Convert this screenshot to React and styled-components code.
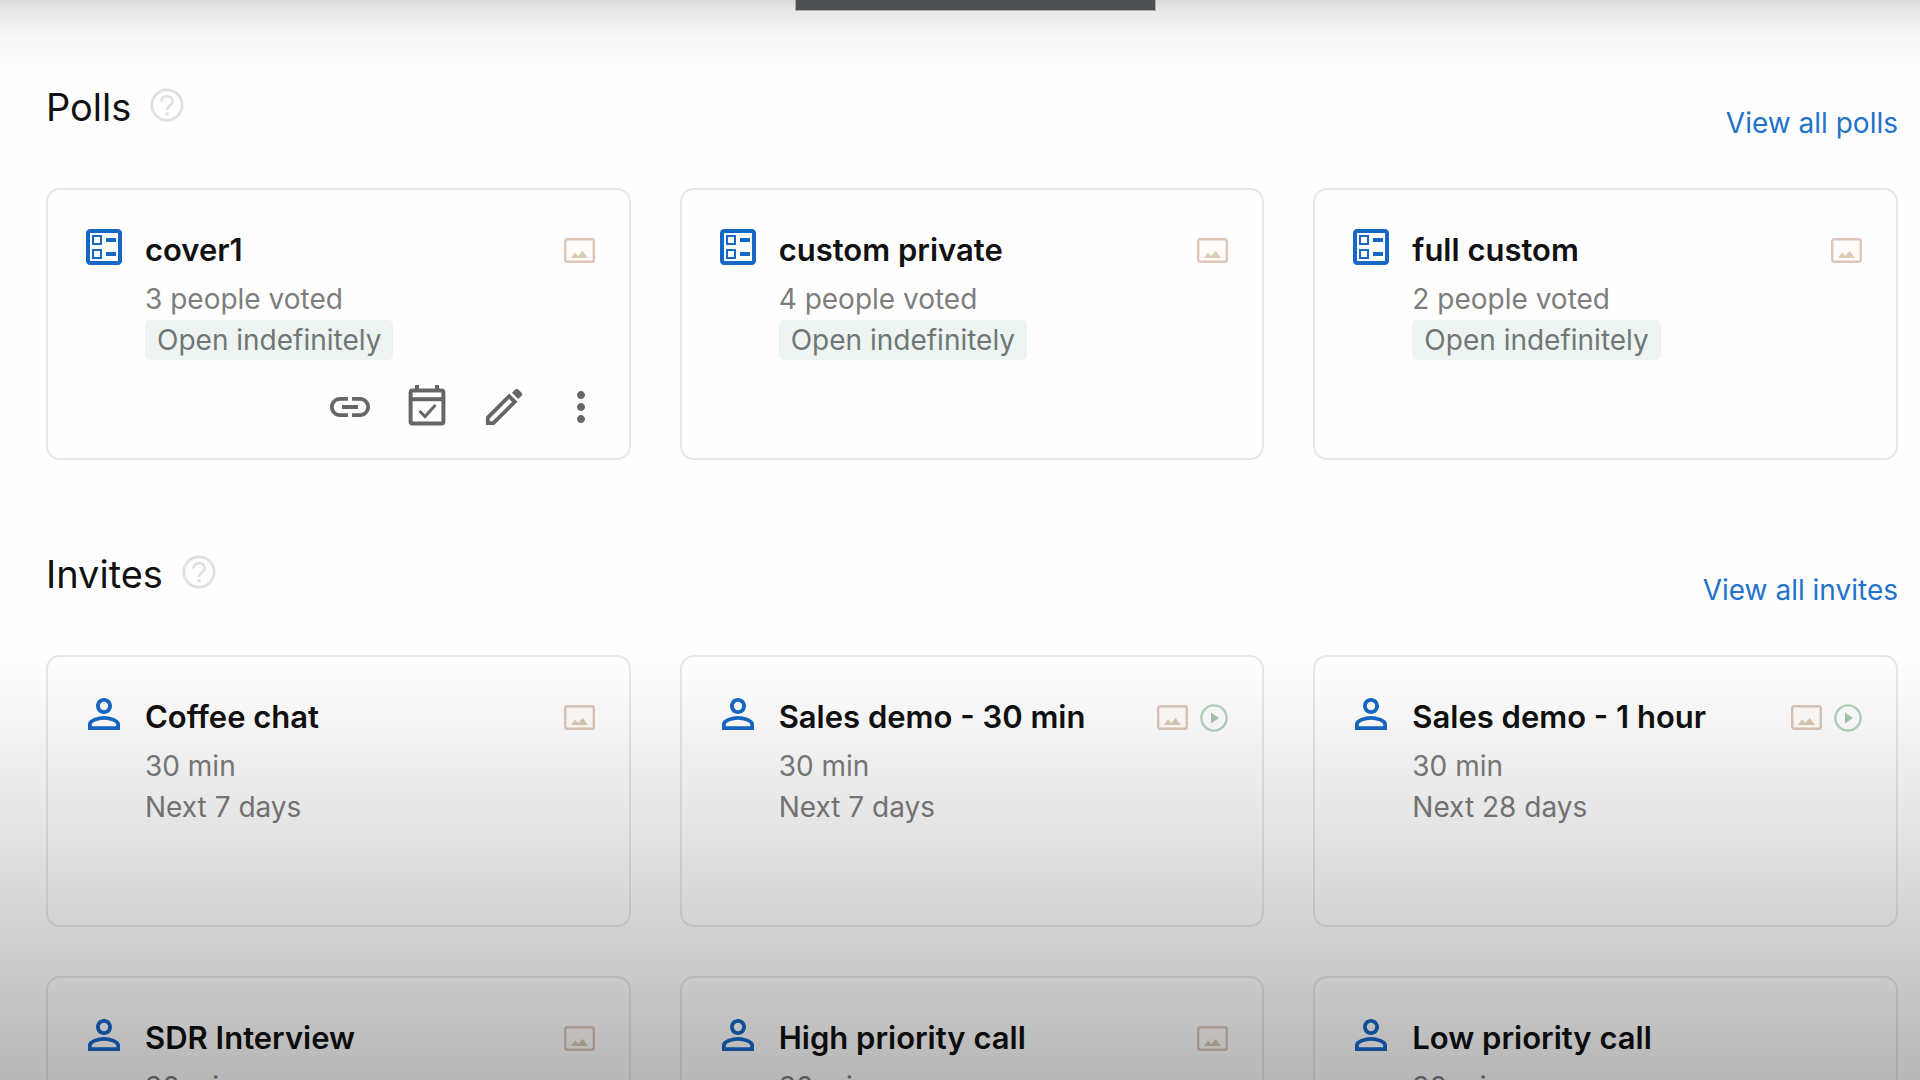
import React from 'react'
import styled, { createGlobalStyle } from 'styled-components'
import { MdOutlineBallot, MdPersonOutline, MdLink, MdMoreVert } from 'react-icons/md'

const polls = [
    { title: 'cover1', people: 3, actions: true },
    { title: 'custom private', people: 4 },
    { title: 'full custom', people: 2 },
]

const invites = [
    { title: 'Coffee chat', length: '30 min', range: 'Next 7 days', image: true },
    { title: 'Sales demo - 30 min', length: '30 min', range: 'Next 7 days', image: true, video: true },
    { title: 'Sales demo - 1 hour', length: '30 min', range: 'Next 28 days', image: true, video: true },
    { title: 'SDR Interview', length: '30 min', range: 'Next 7 days', image: true },
    { title: 'High priority call', length: '30 min', range: 'Next 7 days', image: true },
    { title: 'Low priority call', length: '30 min', range: 'Next 7 days' },
]

function HelpIcon() {
    return (
        <svg width="34" height="34" viewBox="0 0 34 34" fill="none" stroke="#e0e0e0" strokeWidth="2.8">
            <circle cx="17" cy="17" r="15.2" />
            <path d="M11.5 13.5c0-3.2 2.4-5.4 5.5-5.4s5.5 2.2 5.5 5.2c0 3.9-5.4 4.3-5.4 8.7" />
            <path d="M17.1 24.2v3.2" strokeWidth="3" />
        </svg>
    )
}

function ImageIcon() {
    return (
        <svg width="31" height="25" viewBox="0 0 31 25">
            <rect x="1.2" y="1.2" width="28.6" height="22.6" rx="2" fill="#fffaf5" fillOpacity="0.5" stroke="#dcc6b9" strokeWidth="2.4" />
            <path d="M7 20l4-5.5 3.2 3.4 4.6-5 5 7.1z" fill="#dccab4" />
        </svg>
    )
}

function PlayIcon() {
    return (
        <svg width="28" height="28" viewBox="0 0 28 28">
            <circle cx="14" cy="14" r="12.6" fill="none" stroke="#b4d3bd" strokeWidth="2.4" />
            <path d="M11 8.5l8 5.5-8 5.5z" fill="#a8c8b0" />
        </svg>
    )
}

function CalendarIcon() {
    return (
        <svg width="48" height="48" viewBox="0 0 48 48" fill="none" stroke="currentColor">
            <path d="M14 2v6M34 2v6" strokeWidth="4" />
            <rect x="7.6" y="7.6" width="32.8" height="33" rx="2" strokeWidth="4" />
            <path d="M8 16.2h32" strokeWidth="4" />
            <path d="M16.5 28l5.5 5.5L32.5 22" strokeWidth="3" />
        </svg>
    )
}

function PencilIcon() {
    return (
        <svg width="48" height="48" viewBox="0 0 48 48" fill="none" stroke="currentColor">
            <path d="M7.8 40.2v-5.6L29.2 13.2l5.6 5.6L13.4 40.2z" strokeWidth="3.8" />
            <path d="M32 9.8l3.6-3.6q1.2-1 2.4 0l3.8 3.8q1 1.2 0 2.4L38.2 16z" fill="currentColor" stroke="none" />
        </svg>
    )
}

function Section({ title, link, children }) {
    return (
        <section>
            <SectionHeader>
                <SectionTitle>{title}</SectionTitle>
                <HelpButton type="button" aria-label={`About ${title}`}>
                    <HelpIcon />
                </HelpButton>
                <ViewAll href="#">{link}</ViewAll>
            </SectionHeader>
            <Grid>{children}</Grid>
        </section>
    )
}

function Card({ icon, title, image, video, actions, children }) {
    return (
        <CardBox>
            <CardTop>
                <TypeIcon>{icon}</TypeIcon>
                <CardText>
                    <CardTitle>{title}</CardTitle>
                    {children}
                </CardText>
                <Marks>
                    {image && <ImageIcon />}
                    {video && <PlayIcon />}
                </Marks>
            </CardTop>
            {actions && (
                <Actions>
                    <ActionButton type="button" aria-label="Copy link"><MdLink /></ActionButton>
                    <ActionButton type="button" aria-label="Book"><CalendarIcon /></ActionButton>
                    <ActionButton type="button" aria-label="Edit"><PencilIcon /></ActionButton>
                    <ActionButton type="button" aria-label="More"><MdMoreVert /></ActionButton>
                </Actions>
            )}
        </CardBox>
    )
}

export default function App() {
    return (
        <Page>
            <GlobalStyle />
            <Section title="Polls" link="View all polls">
                {polls.map((poll) => (
                    <Card key={poll.title} icon={<MdOutlineBallot />} title={poll.title} image actions={poll.actions}>
                        <Detail>{poll.people} people voted</Detail>
                        <Badge>Open indefinitely</Badge>
                    </Card>
                ))}
            </Section>
            <Section title="Invites" link="View all invites">
                {invites.map((invite) => (
                    <Card key={invite.title} icon={<MdPersonOutline />} title={invite.title} image={invite.image} video={invite.video}>
                        <Detail>{invite.length}</Detail>
                        <Detail>{invite.range}</Detail>
                    </Card>
                ))}
            </Section>
            <Shade />
            <TopBar>
                <Tab />
            </TopBar>
        </Page>
    )
}

const GlobalStyle = createGlobalStyle`
    * {
        box-sizing: border-box;
    }

    body {
        margin: 0;
        background: #fefefe;
        font-family: Inter, sans-serif;
        color: #111;
    }

    button {
        padding: 0;
        border: 0;
        background: none;
        cursor: pointer;
    }

    svg {
        display: block;
    }
`

const Page = styled.main`
    display: flex;
    flex-direction: column;
    gap: 79px;
    height: 100vh;
    padding: 72px 22px 0 46px;
    overflow: hidden;
`

const SectionHeader = styled.header`
    display: flex;
    align-items: flex-start;
    height: 116px;
`

const SectionTitle = styled.h2`
    margin: 0;
    padding-top: 11px;
    font-size: 38px;
    font-weight: 400;
    line-height: 48px;
`

const HelpButton = styled.button`
    margin: 16px 0 0 19px;
`

const ViewAll = styled.a`
    margin-left: auto;
    padding-top: 31px;
    font-size: 28px;
    line-height: 40px;
    color: #2272c9;
    text-decoration: none;
`

const Grid = styled.div`
    display: grid;
    grid-template-columns: repeat(3, 1fr);
    gap: 49px;
`

const CardBox = styled.article`
    display: flex;
    flex-direction: column;
    justify-content: space-between;
    min-height: 272px;
    padding: 33px 24px 27px 32px;
    border: 2px solid #e9e9e9;
    border-radius: 14px;
`

const CardTop = styled.div`
    display: flex;
    align-items: flex-start;
`

const TypeIcon = styled.span`
    flex: none;
    margin-right: 17px;
    font-size: 48px;
    color: #1668c7;
`

const CardText = styled.div`
    flex: 1;
`

const CardTitle = styled.h3`
    margin: 0 0 7px;
    padding-top: 5px;
    font-size: 31px;
    font-weight: 600;
    line-height: 44px;
`

const Detail = styled.p`
    margin: 0;
    font-size: 28px;
    line-height: 41px;
    color: #7d7d7d;
`

const Badge = styled.span`
    display: inline-block;
    padding: 0 12px;
    border-radius: 5px;
    font-size: 28px;
    line-height: 40px;
    color: #6f7776;
    background: #edf4f2;
`

const Marks = styled.div`
    display: flex;
    align-items: center;
    gap: 12px;
    height: 55px;
    padding-right: 10px;
`

const Actions = styled.div`
    display: flex;
    justify-content: flex-end;
    gap: 29px;
`

const ActionButton = styled.button`
    font-size: 48px;
    color: #666;
`

const Shade = styled.div`
    position: fixed;
    inset: 0;
    pointer-events: none;
    background:
        linear-gradient(rgba(0, 0, 0, 0.13), rgba(0, 0, 0, 0.08) 14px, rgba(0, 0, 0, 0.03) 36px, transparent 66px),
        linear-gradient(transparent 61%, rgba(0, 0, 0, 0.05) 69%, rgba(0, 0, 0, 0.11) 78%, rgba(0, 0, 0, 0.18) 87%, rgba(0, 0, 0, 0.28));
`

const TopBar = styled.div`
    position: fixed;
    top: 0;
    left: 0;
    right: 0;
    display: flex;
    justify-content: center;
    padding-left: 30px;
    pointer-events: none;
`

const Tab = styled.div`
    width: 361px;
    height: 11px;
    border: 1px solid #aaa;
    border-top: 0;
    background: #4d5154;
`
